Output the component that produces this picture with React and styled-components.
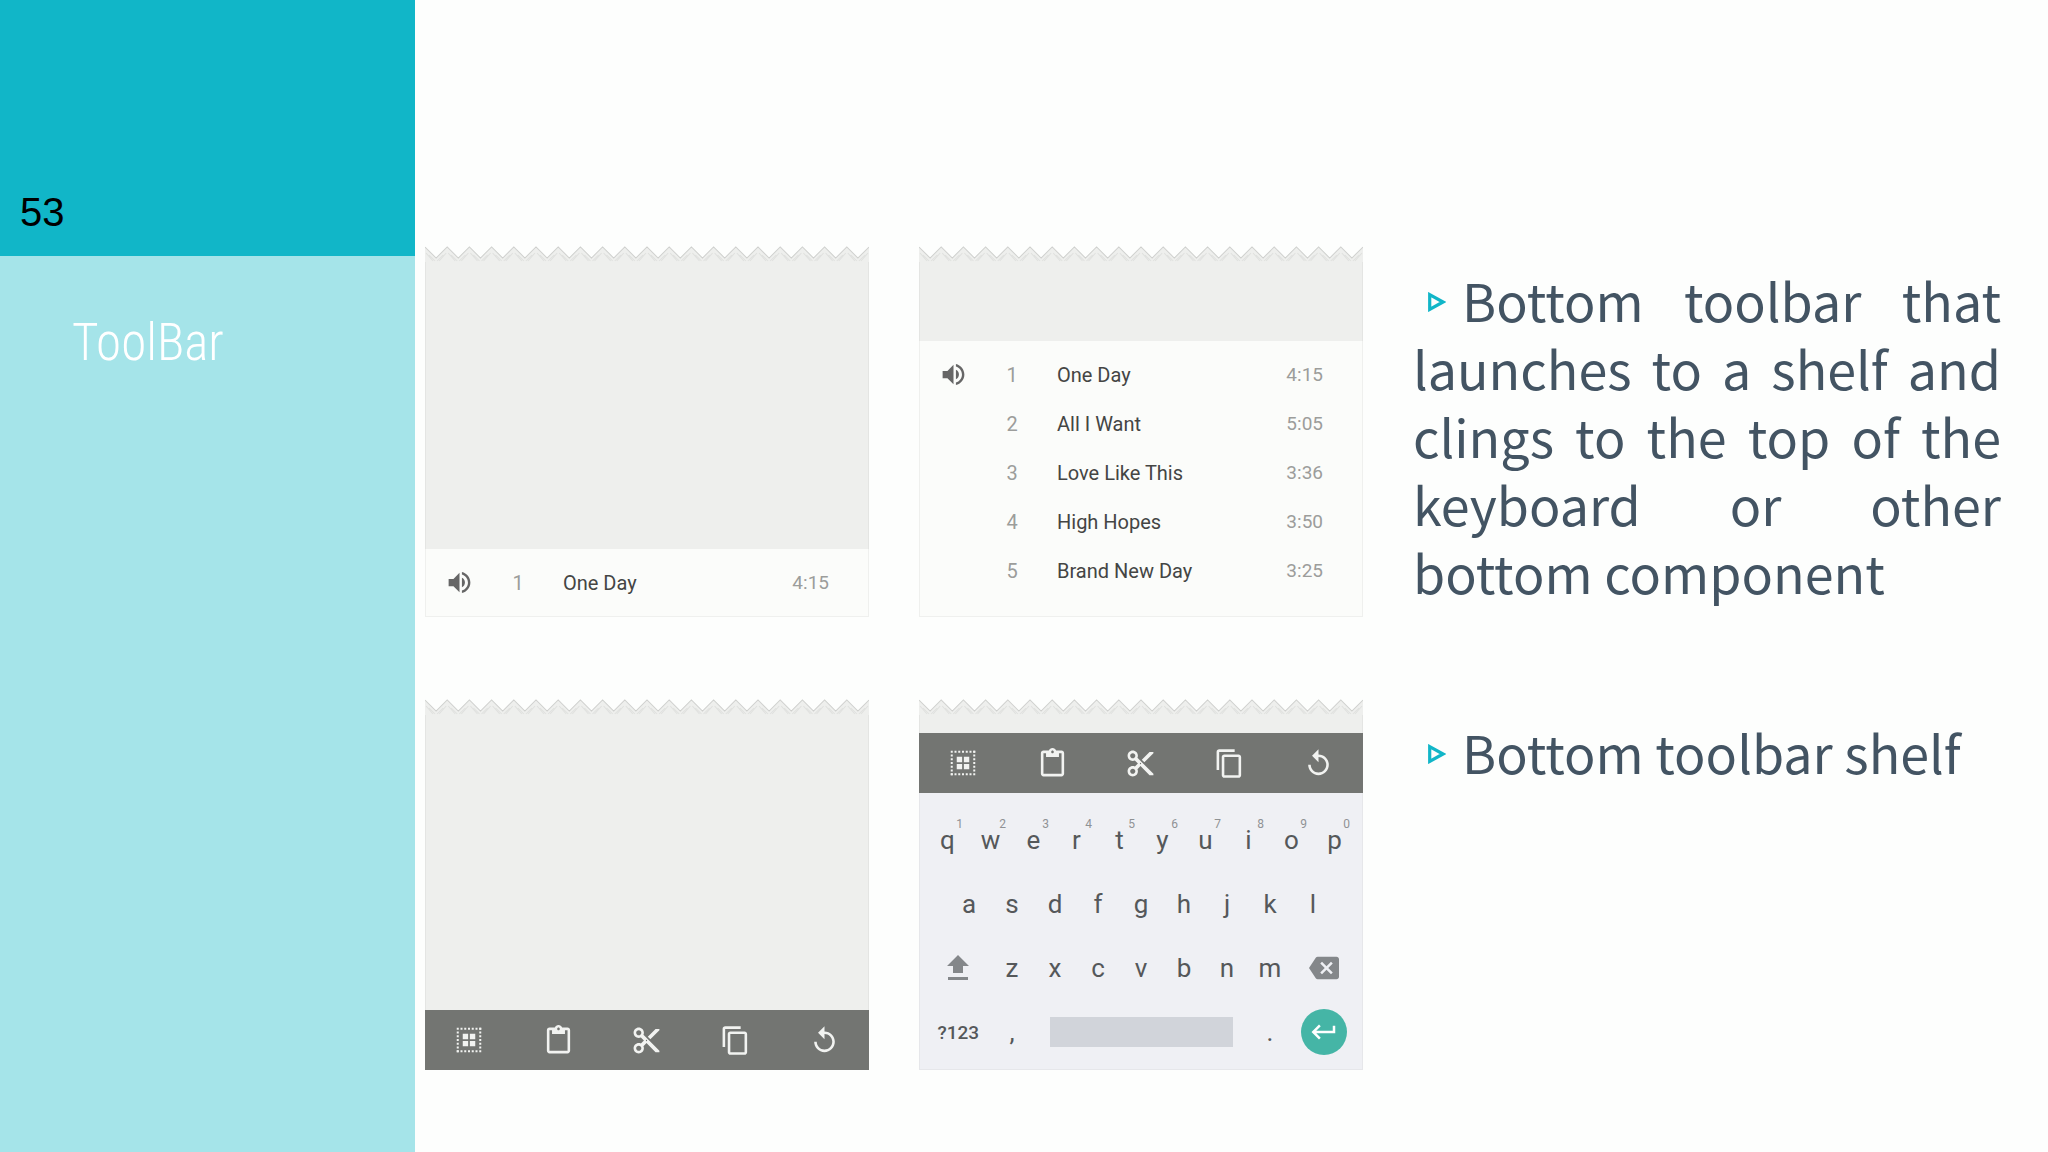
import React from 'react';
import styled, { createGlobalStyle } from 'styled-components'
import {
  MdVolumeUp,
  MdContentPaste,
  MdContentCut,
  MdContentCopy,
  MdReplay,
  MdBackspace,
  MdKeyboardReturn,
} from 'react-icons/md'

const GlobalStyle = createGlobalStyle`
  * {
    box-sizing: border-box;
    margin: 0;
    padding: 0;
  }
  body {
    background: #fdfefd;
    font-family: Roboto, "Liberation Sans", sans-serif;
  }
  button {
    border: none;
    background: none;
    font: inherit;
    color: inherit;
    cursor: pointer;
  }
`

// Slide
const Slide = styled.div`
  display: flex;
  min-height: 100vh;
`
const Sidebar = styled.aside`
  flex: 0 0 415px;
  background: #a5e4e9;
`
const SlideNumber = styled.p`
  display: flex;
  align-items: flex-end;
  height: 256px;
  padding: 0 20px 22px;
  background: #11b6c8;
  color: #000;
  font-family: "Liberation Sans", Arial, sans-serif;
  font-size: 40px;
  line-height: 44px;
`
const Title = styled.h1`
  padding: 57px 72px;
  color: #fff;
  font-family: "Roboto Condensed Light", "Roboto Condensed", "Open Sans Condensed Light", sans-serif;
  font-size: 51px;
  font-weight: 300;
  line-height: 60px;
`
const Content = styled.main`
  flex: 1;
  display: grid;
  grid-template-columns: 938fr 588fr;
  column-gap: 50px;
  align-items: start;
  padding: 246px 47px 82px 10px;
`

// Screens
const Screens = styled.div`
  display: grid;
  grid-template-columns: 1fr 1fr;
  grid-auto-rows: 371px;
  gap: 82px 50px;
`
const Screen = styled.section`
  display: flex;
  flex-direction: column;
`
const TornEdge = styled.svg`
  display: block;
  width: 100%;
  height: 16px;
`
const Sheet = styled.div`
  flex: 1;
  display: flex;
  flex-direction: column;
  justify-content: flex-end;
  background: #eeefed;
  box-shadow: inset 1px 0 #e4e5e3, inset -1px 0 #e4e5e3;
`

// Track list
const Shelf = styled.div`
  padding: 9px 0;
  padding-bottom: ${({ $tall }) => ($tall ? '21px' : '9px')};
  background: #fbfcfa;
  border: 1px solid #eff0ee;
  border-top: none;
`
const Tracks = styled.table`
  width: 100%;
  table-layout: fixed;
  border-collapse: collapse;
  font-size: 20px;
`
const Row = styled.tr`
  height: 49px;
`
const Playing = styled.td`
  width: 66px;
  text-align: center;
  color: #666;
  svg {
    display: block;
    margin: 0 auto;
  }
`
const Position = styled.td`
  width: 52px;
  text-align: center;
  color: #9c9d9b;
`
const Song = styled.td`
  padding-left: 19px;
  color: #444544;
`
const Length = styled.td`
  width: 100px;
  padding-right: 39px;
  text-align: right;
  font-size: 19px;
  color: #9c9d9b;
`

// Toolbar
const Bar = styled.div`
  display: grid;
  grid-template-columns: repeat(5, 1fr);
  height: 60px;
  background: #737572;
  color: #f2f3f1;
`
const Tool = styled.button`
  display: flex;
  justify-content: center;
  align-items: center;
`

// Keyboard
const Keyboard = styled.div`
  display: flex;
  flex-direction: column;
  padding: 15px 6px 5px;
  background: #eff0f4;
  border: 1px solid #e6e7ea;
  border-top: none;
  color: #55585a;
`
const Keys = styled.div`
  display: flex;
  justify-content: center;
  height: 64px;
`
const Key = styled.button`
  position: relative;
  flex: 0 0 ${({ $span = 1 }) => $span * 10}%;
  display: flex;
  justify-content: center;
  align-items: center;
  font-size: ${({ $small }) => ($small ? '19px' : '26px')};
  font-weight: ${({ $small }) => ($small ? 500 : 400)};
  color: ${({ $muted }) => ($muted ? '#84878a' : 'inherit')};
`
const Hint = styled.small`
  position: absolute;
  top: 8px;
  right: 6px;
  font-size: 12px;
  line-height: 16px;
  color: #8f9294;
`
const Space = styled.span`
  width: 100%;
  height: 30px;
  margin: 0 16px;
  background: #d1d4da;
`
const Enter = styled.span`
  display: flex;
  justify-content: center;
  align-items: center;
  width: 46px;
  height: 46px;
  border-radius: 50%;
  background: #45b5a6;
  color: #fff;
`

// Notes
const Notes = styled.ul`
  display: flex;
  flex-direction: column;
  gap: 112px;
  padding-top: 20px;
  list-style: none;
  color: #435463;
  font-family: "Noto Sans CJK SC", "Noto Sans", sans-serif;
  font-size: 52px;
  line-height: 68px;
`
const Note = styled.li`
  text-align: justify;
`
const Bullet = styled.svg`
  width: 18px;
  height: 20px;
  margin: 0 16px 10px 15px;
`

const songs = [
  ['One Day', '4:15'],
  ['All I Want', '5:05'],
  ['Love Like This', '3:36'],
  ['High Hopes', '3:50'],
  ['Brand New Day', '3:25'],
]

const teeth = Array.from({ length: 20 }, (_, i) => i * 22)

const Torn = () => (
  <TornEdge viewBox="0 0 440 16" preserveAspectRatio="none" aria-hidden="true">
    <path d={`M0 16V1${teeth.map((x) => `L${x + 11} 12L${x + 22} 1`).join('')}V16Z`} fill="#eeefed" />
    <path d={`M0 1${teeth.map((x) => `L${x + 11} 12L${x + 22} 1`).join('')}`} fill="none" stroke="#cfd0ce" />
    <path
      d={teeth.map((x) => `M${x + 4} 9l6 6M${x + 18} 9l-6 6M${x + 1} 7l7 8M${x + 21} 7l-7 8`).join('')}
      fill="none"
      stroke="#dfe0de"
    />
  </TornEdge>
)

const SelectAllIcon = () => (
  <svg width="30" height="30" viewBox="0 0 24 24" fill="currentColor">
    {[3, 6, 9, 12, 15, 18, 21].map((n) => (
      <path
        key={n}
        d={`M${n - 0.8} 2.2h1.6v1.6h-1.6zM${n - 0.8} 20.2h1.6v1.6h-1.6zM2.2 ${n - 0.8}h1.6v1.6h-1.6zM20.2 ${n - 0.8}h1.6v1.6h-1.6z`}
      />
    ))}
    <path d="M7 7h4.3v4.3H7zM12.7 7H17v4.3h-4.3zM7 12.7h4.3V17H7zM12.7 12.7H17V17h-4.3z" />
  </svg>
)

const ShiftIcon = () => (
  <svg width="24" height="28" viewBox="0 0 24 28" fill="currentColor">
    <path d="M12 1L1 12h6v7h10v-7h6zM2 23h20v3H2z" />
  </svg>
)

const TrackList = ({ items, tall }) => (
  <Shelf $tall={tall}>
    <Tracks>
      <tbody>
        {items.map(([name, time], i) => (
          <Row key={name}>
            <Playing>{i === 0 && <MdVolumeUp size={29} />}</Playing>
            <Position>{i + 1}</Position>
            <Song>{name}</Song>
            <Length>{time}</Length>
          </Row>
        ))}
      </tbody>
    </Tracks>
  </Shelf>
)

const Toolbar = () => (
  <Bar role="toolbar">
    <Tool aria-label="Select all"><SelectAllIcon /></Tool>
    <Tool aria-label="Paste"><MdContentPaste size={31} /></Tool>
    <Tool aria-label="Cut"><MdContentCut size={31} /></Tool>
    <Tool aria-label="Copy"><MdContentCopy size={31} /></Tool>
    <Tool aria-label="Undo"><MdReplay size={31} /></Tool>
  </Bar>
)

const SoftKeyboard = () => (
  <Keyboard>
    <Keys>
      {[...'qwertyuiop'].map((k, i) => (
        <Key key={k}>{k}<Hint>{(i + 1) % 10}</Hint></Key>
      ))}
    </Keys>
    <Keys>
      {[...'asdfghjkl'].map((k) => <Key key={k}>{k}</Key>)}
    </Keys>
    <Keys>
      <Key $span={1.5} $muted aria-label="Shift"><ShiftIcon /></Key>
      {[...'zxcvbnm'].map((k) => <Key key={k}>{k}</Key>)}
      <Key $span={1.5} $muted aria-label="Backspace"><MdBackspace size={30} /></Key>
    </Keys>
    <Keys>
      <Key $span={1.5} $small>?123</Key>
      <Key>,</Key>
      <Key $span={5} aria-label="Space"><Space /></Key>
      <Key>.</Key>
      <Key $span={1.5} aria-label="Enter"><Enter><MdKeyboardReturn size={30} /></Enter></Key>
    </Keys>
  </Keyboard>
)

const Arrow = () => (
  <Bullet viewBox="0 0 18 20" aria-hidden="true">
    <path d="M1.7 2.6L15 10L1.7 17.4Z" fill="none" stroke="#11b6c8" strokeWidth="3.2" />
  </Bullet>
)

export default function App() {
  return (
    <>
      <GlobalStyle />
      <Slide>
        <Sidebar>
          <SlideNumber>53</SlideNumber>
          <Title>ToolBar</Title>
        </Sidebar>
        <Content>
          <Screens>
            <Screen>
              <Torn />
              <Sheet><TrackList items={songs.slice(0, 1)} /></Sheet>
            </Screen>
            <Screen>
              <Torn />
              <Sheet><TrackList items={songs} tall /></Sheet>
            </Screen>
            <Screen>
              <Torn />
              <Sheet><Toolbar /></Sheet>
            </Screen>
            <Screen>
              <Torn />
              <Sheet>
                <Toolbar />
                <SoftKeyboard />
              </Sheet>
            </Screen>
          </Screens>
          <Notes>
            <Note>
              <Arrow />Bottom toolbar that launches to a shelf and clings to the top of the keyboard or other bottom component
            </Note>
            <Note><Arrow />Bottom toolbar shelf</Note>
          </Notes>
        </Content>
      </Slide>
    </>
  )
}
